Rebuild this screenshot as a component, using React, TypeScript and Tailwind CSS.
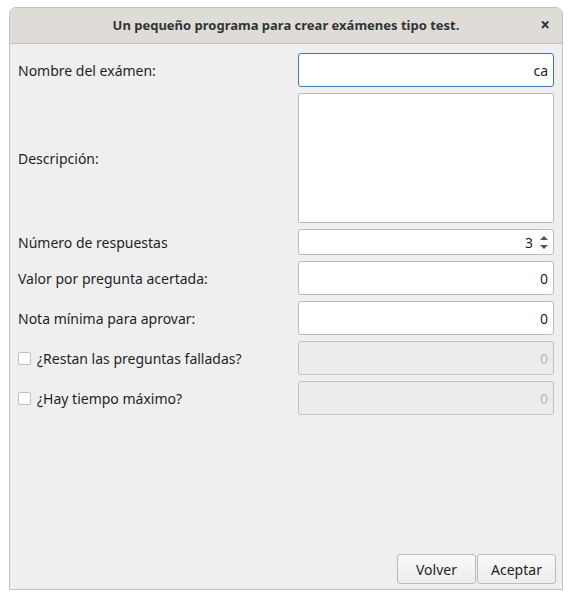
import React from "react";

const font = { fontFamily: '"Noto Sans", "DejaVu Sans", sans-serif' };

function Field({ value, focused, disabled }: { value: string; focused?: boolean; disabled?: boolean }) {
  return (
    <div
      className={
        "flex h-[34px] w-[256px] items-center justify-end rounded-[3px] border px-[5px] text-[14px] " +
        (focused
          ? "border-[#3a76b0] bg-white text-[#1f1f1f]"
          : disabled
          ? "border-[#c3c3c3] bg-[#ececec] text-[#b9b9b9]"
          : "border-[#bcbcbc] bg-white text-[#1f1f1f]")
      }
    >
      {value}
    </div>
  );
}

function Check({ label }: { label: string }) {
  return (
    <div className="flex items-center gap-[6px]">
      <span className="h-[13px] w-[13px] rounded-[2px] border border-[#c0c0c0] bg-white" />
      <span>{label}</span>
    </div>
  );
}

export default function App() {
  return (
    <div className="h-[599px] w-[572px] bg-white pl-[9px] pt-[7px]" style={font}>
      <div className="flex h-[583px] w-[554px] flex-col overflow-hidden rounded-t-[7px] border border-[#c2c2c2] bg-[#efefef]">
        <div className="relative flex h-[36px] shrink-0 items-center justify-center border-b border-[#c6c2bd] bg-[#dfdcd8]">
          <span className="text-[13px] font-bold text-[#2e3436]">Un pequeño programa para crear exámenes tipo test.</span>
          <span className="absolute right-[12px] top-[8px] text-[17px] font-bold leading-none text-[#2e3436]">×</span>
        </div>

        <div className="flex flex-1 flex-col pl-[8px] pr-[8px] pt-[9px] text-[14px] text-[#1f1f1f]">
          <div className="grid grid-cols-[1fr_256px] gap-y-[6px]">
            <div className="flex items-center">Nombre del exámen:</div>
            <Field value="ca" focused />

            <div className="flex items-center">Descripción:</div>
            <div className="h-[130px] w-[256px] rounded-[2px] border border-[#bcbcbc] bg-white" />

            <div className="flex items-center">Número de respuestas</div>
            <div className="flex h-[26px] w-[256px] items-center justify-end rounded-[3px] border border-[#bcbcbc] bg-white pr-[3px]">
              <span>3</span>
              <div className="ml-[5px] flex h-[22px] w-[12px] flex-col items-center justify-center gap-[5px] bg-[#fafafa]">
                <span className="h-0 w-0 border-x-[4px] border-b-[4px] border-x-transparent border-b-[#555]" />
                <span className="h-0 w-0 border-x-[4px] border-t-[4px] border-x-transparent border-t-[#555]" />
              </div>
            </div>

            <div className="flex items-center">Valor por pregunta acertada:</div>
            <Field value="0" />

            <div className="flex items-center">Nota mínima para aprovar:</div>
            <Field value="0" />

            <div className="flex items-center">
              <Check label="¿Restan las preguntas falladas?" />
            </div>
            <Field value="0" disabled />

            <div className="flex items-center">
              <Check label="¿Hay tiempo máximo?" />
            </div>
            <Field value="0" disabled />
          </div>

          <div className="mt-auto mb-[5px] mr-[-2px] flex justify-end gap-[1px]">
            <button className="h-[30px] w-[79px] rounded-[3px] border border-[#bababa] bg-gradient-to-b from-[#f9f9f9] to-[#ececec] text-[14px] text-[#1f1f1f]">
              Volver
            </button>
            <button className="h-[30px] w-[79px] rounded-[3px] border border-[#bababa] bg-gradient-to-b from-[#f9f9f9] to-[#ececec] text-[14px] text-[#1f1f1f]">
              Aceptar
            </button>
          </div>
        </div>
      </div>
    </div>
  );
}
